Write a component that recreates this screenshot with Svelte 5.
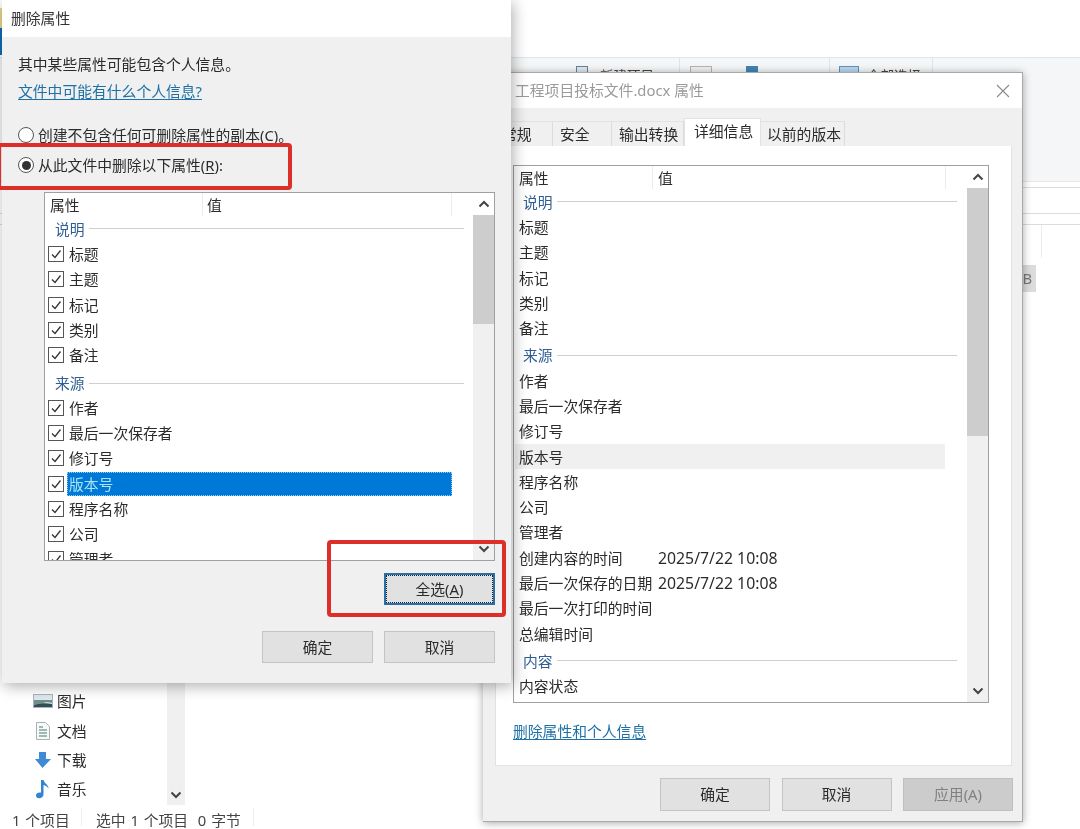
<script>
  const leftGroups = [
    { title: '说明', rows: ['标题', '主题', '标记', '类别', '备注'] },
    { title: '来源', rows: ['作者', '最后一次保存者', '修订号', '版本号', '程序名称', '公司', '管理者'] }
  ];
  const rightGroups = [
    { title: '说明', rows: [['标题'], ['主题'], ['标记'], ['类别'], ['备注']] },
    { title: '来源', rows: [['作者'], ['最后一次保存者'], ['修订号'], ['版本号'], ['程序名称'], ['公司'], ['管理者'],
      ['创建内容的时间', '2025/7/22 10:08'], ['最后一次保存的日期', '2025/7/22 10:08'], ['最后一次打印的时间'], ['总编辑时间']] },
    { title: '内容', rows: [['内容状态']] }
  ];
  const tabs = [
    { label: '常规', w: 58 },
    { label: '安全', w: 59 },
    { label: '输出转换', w: 72 },
    { label: '详细信息', w: 77, active: true },
    { label: '以前的版本', w: 84 }
  ];
</script>

{#snippet up()}
  <svg width="12" height="8" viewBox="0 0 12 8"><path d="M1.5 6.5 6 2l4.500 4.500" fill="none" stroke="#444" stroke-width="2"/></svg>
{/snippet}
{#snippet down()}
  <svg width="12" height="8" viewBox="0 0 12 8"><path d="M1.500 1.500 6 6l4.500-4.500" fill="none" stroke="#444" stroke-width="2"/></svg>
{/snippet}

<div class="stage">
  <div class="explorer">
    <div class="top"><span class="sliver"></span></div>
    <div class="ribbon">
      <div class="rgroup g1"><span class="ico sq"></span><span class="rtext">新建项目</span></div>
      <div class="rgroup g2"><span class="ico doc"></span><span class="ico blue"></span></div>
      <div class="rgroup g3"><span class="ico sq big"></span><span class="rtext">全部选择</span></div>
    </div>
    <div class="addr"></div>
    <div class="hdr"><span class="vline"></span></div>
    <div class="badge">B</div>
    <div class="pane">
      <div class="nav">
        <div class="nav-item">
          <svg width="20" height="14" viewBox="0 0 20 14"><rect x=".5" y=".5" width="19" height="13" fill="#dfe7ee" stroke="#a9b4bd"/><path d="M1 6h18v3c-5-2-9 0-18 2z" fill="#6f8f8c"/><path d="M1 11c6-2 12-2 18-1v3H1z" fill="#2f4f55"/></svg>
          <span>图片</span>
        </div>
        <div class="nav-item">
          <svg width="20" height="20" viewBox="0 0 20 20"><path d="M3.500 1.500h9l4 4v13h-13z" fill="#f7f9f9" stroke="#a8b1b5"/><path d="M6 6h4M6 9h8M6 12h8M6 15h8" stroke="#7fa6a0" stroke-width="1.500"/></svg>
          <span>文档</span>
        </div>
        <div class="nav-item">
          <svg width="20" height="20" viewBox="0 0 20 20"><path d="M6 2h7v7h5l-8.500 9L2 9h4z" fill="#3d8bd4"/></svg>
          <span>下载</span>
        </div>
        <div class="nav-item">
          <svg width="20" height="20" viewBox="0 0 20 20"><path d="M8 1h2.500c.3 3 5 4.500 5 8.500-1.200-2-3-3-5-3.500v9.500c0 2.300-2.200 3.700-4.500 3.700S3 18 3 16.300c0-2 2.300-3.300 5-2.800z" fill="#2f86cf"/></svg>
          <span>音乐</span>
        </div>
      </div>
      <div class="navbar">{@render down()}</div>
    </div>
    <div class="status">
      <span class="s1">1 个项目</span><span class="s2">选中 1 个项目&nbsp; 0 字节</span>
    </div>
  </div>

  <section class="win right">
    <header class="wtitle gray">
      <span>工程项目投标文件.docx 属性</span>
      <svg class="close" width="16" height="16" viewBox="0 0 16 16"><path d="M2 2l12 12M14 2 2 14" stroke="#8a8a8a" stroke-width="1.100"/></svg>
    </header>
    <div class="tabs">
      {#each tabs as t}
        <div class="tab" class:active={t.active} style="width:{t.w}px">{t.label}</div>
      {/each}
    </div>
    <div class="panel">
      <div class="list rlist">
        <div class="lcontent">
          <div class="lhead"><span class="hname">属性</span><span class="hval">值</span></div>
          {#each rightGroups as g, i}
            <div class="cat" class:first={i === 0}><span>{g.title}</span><i></i></div>
            {#each g.rows as r}
              <div class="row rrow" class:hover={r[0] === '版本号'}><span class="name">{r[0]}</span>{#if r[1]}<span class="val">{r[1]}</span>{/if}</div>
            {/each}
          {/each}
        </div>
        <div class="sbar"><div class="arrow">{@render up()}</div><div class="thumb rthumb"></div><div class="arrow end">{@render down()}</div></div>
      </div>
      <a class="link rl" href="#top">删除属性和个人信息</a>
    </div>
    <div class="btns rbtns">
      <div class="btn">确定</div><div class="btn">取消</div><div class="btn off">应用(A)</div>
    </div>
  </section>

  <section class="win left">
    <header class="wtitle">删除属性</header>
    <div class="lbody">
      <p class="line info">其中某些属性可能包含个人信息。</p>
      <a class="line link" href="#top">文件中可能有什么个人信息?</a>
      <div class="radio r1"><span class="rd"></span><span>创建不包含任何可删除属性的副本(<u>C</u>)。</span></div>
      <div class="radio r2"><span class="rd on"></span><span>从此文件中删除以下属性(<u>R</u>):</span></div>
      <div class="list llist">
        <div class="lcontent">
          <div class="lhead"><span class="hname lh">属性</span><span class="hval">值</span></div>
          {#each leftGroups as g, i}
            <div class="cat" class:first={i === 0}><span>{g.title}</span><i></i></div>
            {#each g.rows as r}
              <div class="row crow">
                <span class="cb"><svg width="14" height="14" viewBox="0 0 14 14"><path d="M3 7.500 6 10.500 11.500 3.500" fill="none" stroke="#333" stroke-width="1.300"/></svg></span>
                <span class="lab" class:sel={r === '版本号'}>{r}</span>
              </div>
            {/each}
          {/each}
        </div>
        <div class="sbar"><div class="arrow">{@render up()}</div><div class="thumb lthumb"></div><div class="arrow end">{@render down()}</div></div>
      </div>
      <div class="btns selall"><div class="btn focus">全选(<u>A</u>)</div></div>
      <div class="btns lbtns"><div class="btn">确定</div><div class="btn">取消</div></div>
    </div>
  </section>

  <div class="mark m1"></div>
  <div class="mark m2"></div>
</div>

<style>
  :global(body) { margin: 0; background: #fff; }
  .stage {
    position: relative; width: 1080px; height: 829px; overflow: hidden; background: #fff;
    font: 14.8px/24px "Noto Sans", "Noto Sans CJK SC", sans-serif; color: #2b2b2b;
    filter: blur(0.35px);
  }
  .explorer { position: absolute; inset: 0; display: flex; flex-direction: column; }
  .top { height: 58px; border-bottom: 1px solid #e3e6e8; flex: none; box-sizing: border-box; padding-top: 8px; }
  .sliver { display: block; width: 2px; height: 47px; background: linear-gradient(#e8d68a 0 20px, #0f6cb5 20px); }
  .ribbon { height: 124px; flex: none; background: #f5f6f7; border-bottom: 1px solid #e6e6e6; box-sizing: border-box; display: flex; padding-left: 566px; }
  .rgroup { height: 14px; overflow: hidden; display: flex; align-items: flex-start; box-sizing: border-box; padding-top: 8px; border-right: 1px solid #e2e3e5; }
  .g1 { width: 114px; gap: 12px; padding-left: 10px; box-sizing: border-box; }
  .g2 { width: 150px; gap: 34px; padding-left: 10px; }
  .g3 { width: 103px; gap: 8px; padding-left: 9px; }
  .rtext { line-height: 22px; color: #444; font-size: 13.5px; white-space: nowrap; margin-top: -1px; }
  .ico { width: 12px; height: 14px; flex: none; border: 1px solid #6c8193; background: #dfe9f1; box-sizing: border-box; }
  .ico.big { width: 20px; border-color: #5b93c4; background: #b9d6ee; }
  .ico.doc { width: 22px; background: #f0f0f0; border-color: #b5b5b5; }
  .ico.blue { background: #3f86b5; border-color: #3f86b5; }
  .addr { height: 27px; flex: none; margin-top: 5px; border-top: 1px solid #dcdcdc; border-bottom: 1px solid #dcdcdc; box-sizing: border-box; }
  .hdr { height: 41px; flex: none; margin-top: 10px; border-top: 1px solid #dcdcdc; box-sizing: border-box; padding-left: 1041px; }
  .vline { display: block; width: 1px; height: 33px; background: #ececec; }
  .badge { flex: none; width: 36px; height: 27px; margin-left: 1000px; background: #dcdcdc; color: #777; text-align: right; line-height: 27px; padding-right: 4px; box-sizing: border-box; }
  .pane { flex: 1; display: flex; min-height: 0; align-items: stretch; }
  .nav { width: 167px; box-sizing: border-box; padding: 0 0 1px 33px; display: flex; flex-direction: column; justify-content: flex-end; }
  .nav-item { height: 29.400px; display: flex; align-items: center; gap: 4px; }
  .nav-item svg { width: 20px; flex: none; }
  .navbar { width: 18px; background: #f0f0f0; display: flex; align-items: flex-end; justify-content: center; padding-bottom: 6px; box-sizing: border-box; }
  .status { height: 24px; flex: none; display: flex; padding: 3px 0 0 12px; color: #444; box-sizing: border-box; word-spacing: 1px; }
  .s1 { width: 69px; border-right: 1px solid #eee; height: 18px; }
  .s2 { padding-left: 14px; padding-right: 12px; border-right: 1px solid #eee; height: 18px; }

  .win { position: absolute; background: #f0f0f0; box-sizing: border-box; display: flex; flex-direction: column; }
  .left { left: 2px; top: 0; width: 509px; height: 683px; box-shadow: 2px 3px 14px rgba(0,0,0,.32); }
  .right { left: 483px; top: 72px; width: 540px; height: 750px; border: 1px solid #a8a8a8; border-width: 1px 1px 1px 0; box-shadow: 0 1px 8px rgba(0,0,0,.35); }
  .wtitle { height: 37px; flex: none; background: #fff; padding-left: 9px; line-height: 37px; color: #333; box-sizing: border-box; }
  .wtitle.gray { height: 35px; line-height: 35px; padding-left: 32px; color: #9a9a9a; display: flex; justify-content: space-between; align-items: center; padding-right: 11px; }
  .tabs { display: flex; height: 28px; flex: none; margin: 10px 0 0 12px; align-items: flex-end; }
  .tab { height: 25px; line-height: 25px; box-sizing: border-box; padding-left: 7px; background: #f0f0f0; border-right: 1px solid #dcdcdc; border-top: 1px solid #e2e2e2; white-space: nowrap; }
  .tab:last-child { padding-left: 6px; }
  .tab.active { height: 28px; line-height: 24px; background: #fff; padding-left: 9px; border: 1px solid #e2e2e2; border-bottom: 0; }
  .panel { width: 517px; height: 620px; flex: none; margin-left: 12px; background: #fff; border: 1px solid #e2e2e2; border-top: 0; box-sizing: border-box; padding: 19px 0 0 17px; }
  .lbody { flex: 1; padding: 15px 16px 0; display: flex; flex-direction: column; }
  .line { margin: 0; display: block; }
  .info { height: 24px; }
  .link { color: #1d71a6; text-decoration: underline; text-underline-offset: 2px; width: max-content; }
  .lbody .link { margin-top: 3px; }
  .rl { display: block; margin-top: 16px; }
  .radio { display: flex; align-items: center; height: 24px; gap: 4px; }
  .r1 { margin-top: 20px; }
  .r2 { margin-top: 6px; }
  .rd { width: 16px; height: 16px; border: 1px solid #555; border-radius: 50%; background: #fff; box-sizing: border-box; display: flex; align-items: center; justify-content: center; flex: none; }
  .rd.on::after { content: ""; width: 9px; height: 9px; border-radius: 50%; background: #333; }
  u { text-underline-offset: 2px; text-decoration-thickness: 1px; }

  .list { display: flex; background: #fff; border: 1px solid #a0a0a0; box-sizing: border-box; overflow: hidden; flex: none; }
  .llist { width: 451px; height: 369px; margin: 15px 0 0 26px; }
  .rlist { width: 476px; height: 538px; }
  .lcontent { flex: 1; min-width: 0; overflow: hidden; }
  .lhead { height: 23px; display: flex; line-height: 25px; }
  .hname { padding-left: 5px; border-right: 1px solid #ececec; box-sizing: content-box; margin-right: 4px; width: 147px; }
  .lh { width: 152px; }
  .rlist .hname { width: 133px; margin-right: 5px; }
  .hval { flex: 1; margin-right: 21px; border-right: 1px solid #ececec; }
  .cat { height: 27px; display: flex; align-items: center; gap: 4px; padding: 4px 9px 0 10px; box-sizing: border-box; color: #2f5f92; }
  .cat.first { height: 25.500px; padding-top: 0; }
  .rlist .cat { padding-left: 9px; padding-right: 10px; padding-top: 2px; }
  .rlist .cat.first { padding-top: 0; }
  .cat i { flex: 1; height: 1px; background: #cfcfcf; }
  .row { height: 25.300px; display: flex; align-items: center; white-space: nowrap; }
  .rrow { margin: 0 22px 0 1px; padding-left: 4px; }
  .rrow.hover { background: #f0f0f0; }
  .name { width: 139px; flex: none; }
  .val { font-size: 15.8px; }
  .crow { padding-left: 3px; margin-right: 21px; }
  .cb { width: 16px; height: 16px; border: 1px solid #555; background: #fff; box-sizing: border-box; flex: none; display: flex; align-items: center; justify-content: center; margin-right: 3px; }
  .lab { flex: 1; height: 24px; line-height: 24px; padding-left: 2px; }
  .lab.sel { background: #0078d7; color: #a9e3f6; outline: 1px dotted #8fd0ee; outline-offset: -1px; }
  .sbar { width: 21px; flex: none; background: #f0f0f0; display: flex; flex-direction: column; }
  .arrow { height: 22px; flex: none; display: flex; align-items: center; justify-content: center; background: #fff; }
  .arrow.end { margin-top: auto; background: #f0f0f0; }
  .thumb { background: #cdcdcd; }
  .lthumb { height: 109px; }
  .rthumb { height: 248px; }

  .btns { display: flex; justify-content: flex-end; flex: none; }
  .btn { width: 111px; height: 32px; background: #e1e1e1; border: 1px solid #c4c4c4; box-sizing: border-box; text-align: center; line-height: 30px; }
  .selall { margin-top: 12px; }
  .lbtns { margin-top: 26px; gap: 11px; }
  .focus { border: 2px solid #2a6ea8; line-height: 28px; outline: 1px dotted #222; outline-offset: -3px; }
  .rbtns { margin-top: 12px; padding-right: 9px; gap: 11.500px; }
  .rbtns .btn { width: 110px; height: 33px; line-height: 31px; }
  .btn.off { background: #cccccc; border-color: #bfbfbf; color: #808080; }

  .mark { position: absolute; border: 4px solid #dc2f28; border-radius: 4px; box-sizing: border-box; }
  .m1 { left: -3px; top: 143px; width: 295px; height: 47px; }
  .m2 { left: 327px; top: 540px; width: 179px; height: 77px; }
</style>
